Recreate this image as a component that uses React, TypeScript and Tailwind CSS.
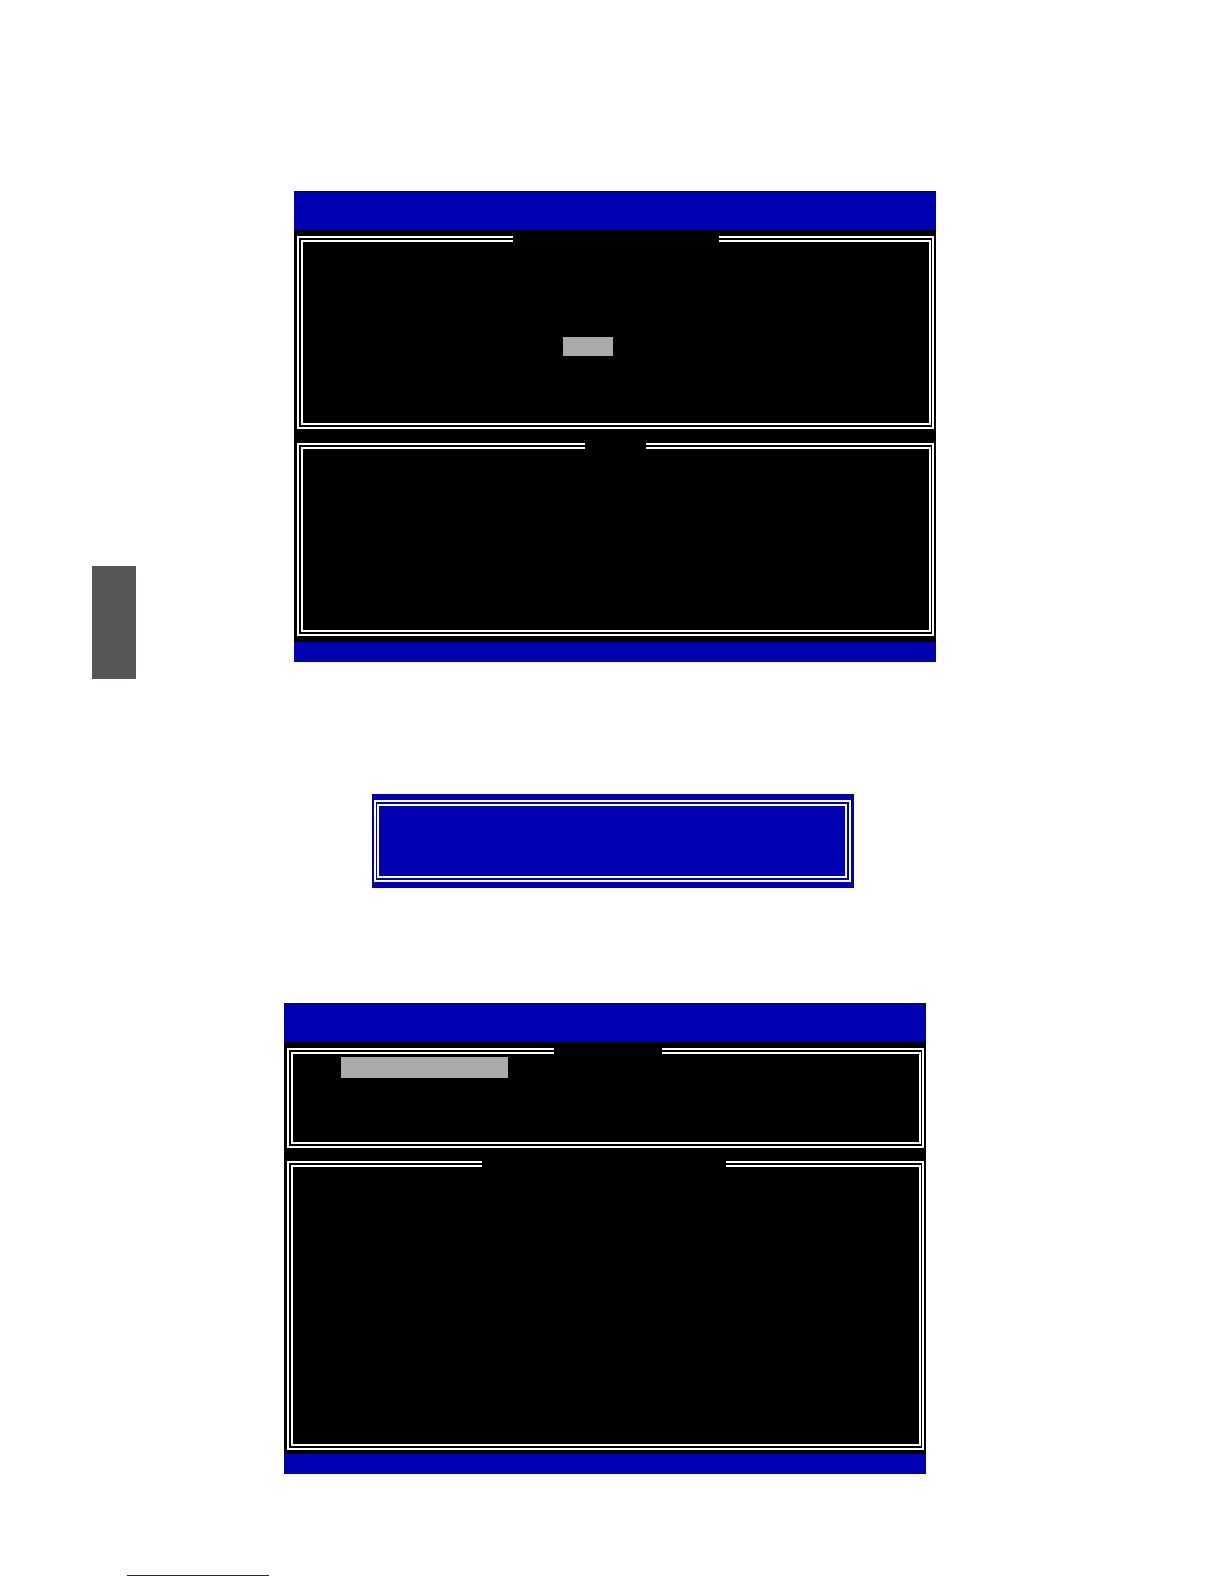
import type { ReactNode } from 'react'
import clsx from 'clsx'

// double-line box; the title patch breaks the top line
function Frame({ title, pad = 'pl-0.5 pr-px', className, children }: { title?: string; pad?: string; className: string; children?: ReactNode }) {
  return (
    <section className={clsx('border-2 border-white py-0.5', pad)}>
      <div className={clsx('border-2 border-white', className)}>
        {title && <div className={clsx('-mt-3 h-3 bg-black', title)} />}
        {children}
      </div>
    </section>
  )
}

function Screen({ className, children }: { className?: string; children: ReactNode }) {
  return (
    <div className={clsx('w-full max-w-[642px] bg-black', className)}>
      <header className="h-[39px] border-t border-[#000080] bg-[#0000b3]" />
      <div className="flex flex-col pl-[3px] pr-0.5">{children}</div>
      <footer className="h-5 bg-[#0000b3]" />
    </div>
  )
}

export default function App() {
  return (
    <div className="min-h-screen bg-white font-['Liberation_Sans',sans-serif]">
      <div className="flex">
        <aside className="w-[136px] shrink-0 pl-[92px] pt-[566px]">
          <div className="h-[113px] bg-[#575558]" />
        </aside>

        <main className="flex-1 pl-[148px] pr-8 pt-[191px]">
          {/* Volume screen */}
          <Screen className="ml-[10px]">
            <div className="flex flex-col gap-3.5 pb-1.5 pt-1.5">
              <Frame title="ml-[210px] w-[206px]" className="h-[185px]">
                <div className="ml-[260px] mt-[95px] h-[19px] w-[50px] bg-[#aaaaaa]" />
              </Frame>
              <Frame title="ml-[282px] w-[61px]" className="h-[185px]" />
            </div>
          </Screen>

          {/* Confirm dialog */}
          <div className="ml-[88px] mt-[132px] w-full max-w-[482px] bg-[#0000b3] py-1.5 pl-0.5 pr-[3px]">
            <Frame pad="pl-px pr-0.5" className="h-[74px]" />
          </div>

          {/* Main menu screen */}
          <Screen className="mt-[115px]">
            <div className="flex flex-col gap-[13px] pb-1 pt-1.5">
              <Frame title="ml-[261px] w-[108px]" className="h-[92px]">
                <div className="ml-[48px] mt-[3px] h-[21px] w-[167px] bg-[#aaaaaa]" />
              </Frame>
              <Frame title="ml-[189px] w-[244px]" className="h-[281px]" />
            </div>
          </Screen>
        </main>
      </div>

      <a href="#top" aria-label="Back to top" className="ml-[127px] mt-[82px] block h-5 w-[142px] border-b border-[#1a1a8c]" />
    </div>
  )
}
